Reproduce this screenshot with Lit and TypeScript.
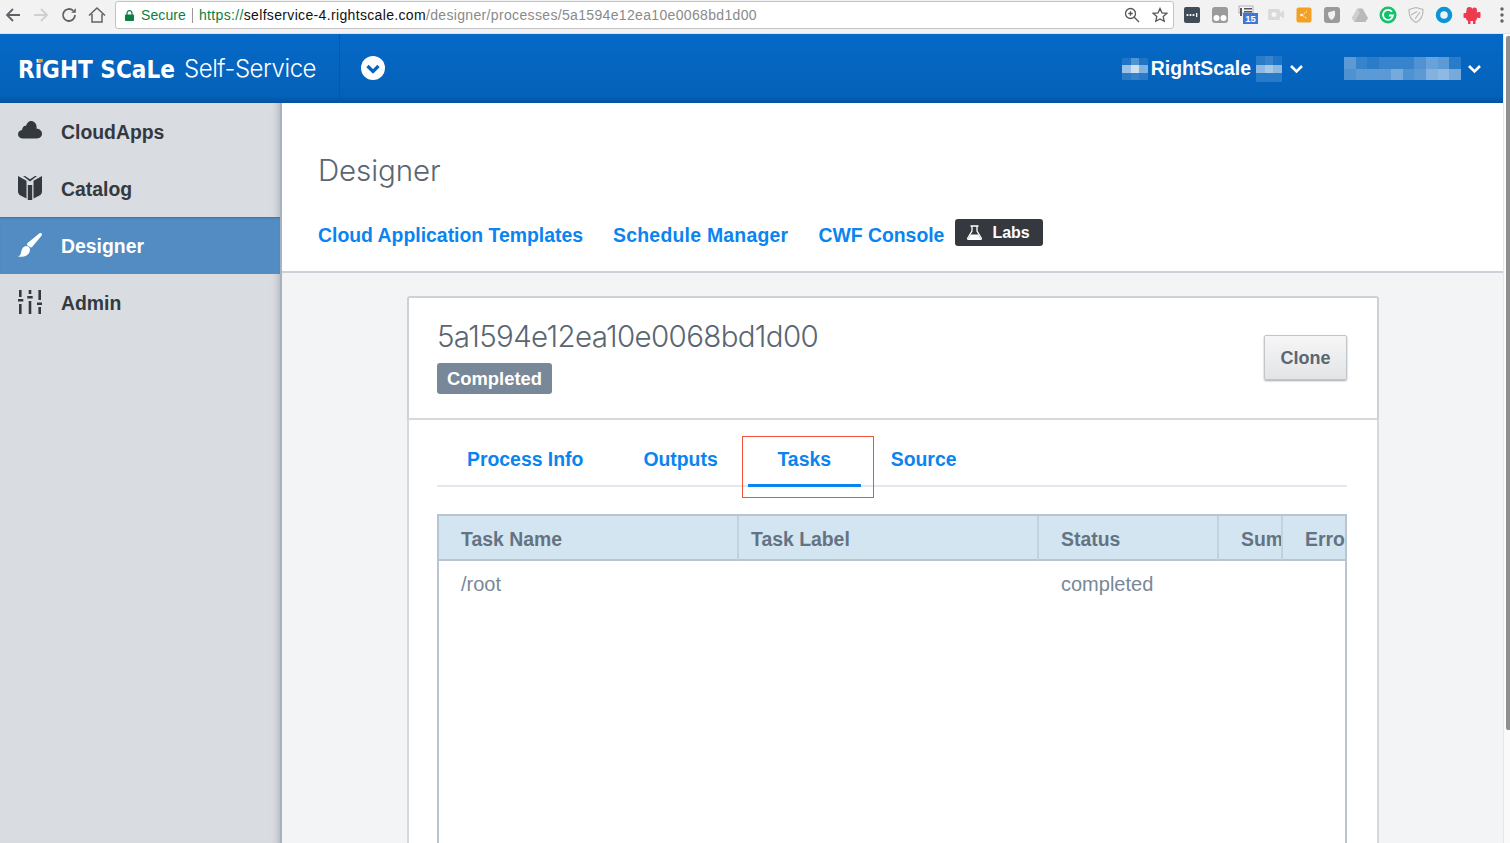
import { LitElement, html, css, svg } from "lit";
import { customElement } from "lit/decorators.js";

const pix = (w: number, h: number, cols: number, rows: number, cells: number[]) => svg`
  <svg width=${w} height=${h} viewBox="0 0 ${cols} ${rows}" preserveAspectRatio="none" shape-rendering="crispEdges">
    ${cells.map((a, i) => svg`<rect x=${i % cols} y=${Math.floor(i / cols)} width="1" height="1" fill="#fff" fill-opacity=${a}></rect>`)}
  </svg>`;

const navIcons = {
  cloud: html`<svg width="24" height="24" viewBox="0 0 24 24"><path d="M5 19.500C2 19.500 0 17.600 0 15.200c0-2.300 1.700-4 4-4.300C4.300 7.800 6.400 6.400 8 6.700 9 3.600 11 2 13 2c3 0 5.300 2.300 5.600 5.600 0 .9 0 1.400-.2 1.900 3.200.2 5.600 2.500 5.600 5.300 0 2.700-2.300 4.700-5 4.700z" fill="#33393f"/></svg>`,
  book: html`<svg width="24" height="24" viewBox="0 0 24 24" fill="#33393f"><path d="M0 0l8.500 4.700V22.500L3 19.700C1 18.700 0 17.500 0 15.500z"/><path d="M24 0l-8.500 4.700V22.500l5.500-2.800c2-1 3-2.200 3-4.200z"/><path d="M9.800 9h4.400v15H9.800z"/><path d="M5 0h2l5 3.300L17 0h2l-7 5.500z"/></svg>`,
  brush: html`<svg width="24" height="24" viewBox="0 0 24 24" fill="#fff"><path d="M21.500 .3c1-.7 2.500-.2 2.500 1.200 0 .6-.3 1.100-.7 1.600L14.300 13.800c-.6.700-1.300.9-2.100.5L9.500 12.300c-.7-.6-.8-1.400-.2-2z"/><path d="M8.500 13c1.800.2 3.500 1.500 3.500 3.800 0 4-3.700 6.800-8 7-1.500.1-3 0-4-.5 2.200-.6 2.800-2 3.200-4.600C3.600 15.900 5.900 12.800 8.500 13z"/></svg>`,
  sliders: html`<svg width="24" height="24" viewBox="0 0 24 24" fill="#33393f"><path d="M1 0h2.600v7H1zM0 9h5.300v2.600H0zM1 14h2.600v10H1zM10.700 0h2.600v4h-2.600zM9.300 6h5.400v2.600H9.300zM10.700 11h2.600v13h-2.600zM20.400 0h2.600v10h-2.600zM19 12.500h5v2.600h-5zM20.400 17h2.600v7h-2.600z"/></svg>`,
};

@customElement("app-root")
export class AppRoot extends LitElement {
  static styles = css`
    :host { display: block; width: 100%; height: 843px; overflow: hidden; font-family: "Liberation Sans", Arial, sans-serif; color: #5a6672; background: #fff; }
    * { box-sizing: border-box; }
    .chrome { height: 34px; background: #f2f2f2; display: flex; align-items: flex-start; padding-top: 1px; border-bottom: 1px solid #e2e2e2; }
    .nav { width: 115px; height: 28px; display: flex; align-items: center; padding-left: 4px; gap: 10px; flex: none; }
    .nav svg { display: block; flex: none; }
    .omni { width: 1059px; height: 28px; flex: none; background: #fff; border: 1px solid #c4c4c4; border-radius: 3px; display: flex; align-items: center; padding-left: 9px; font-size: 14px; white-space: nowrap; }
    .secure { color: #0b8043; margin-left: 7px; letter-spacing: .1px; }
    .sep { width: 1px; height: 15px; background: #999; margin: 0 6px; }
    .url { letter-spacing: .34px; }
    .g { color: #0b8043; } .k { color: #111; } .d { color: #8a8a8a; }
    .omni-end { margin-left: auto; display: flex; gap: 12px; align-items: center; padding-right: 5px; }
    .exts { display: flex; align-items: center; height: 28px; margin-left: 8px; gap: 8px; }
    .ext { width: 20px; height: 20px; display: block; flex: none; }
    .dots { margin-left: 10px; }

    .app { display: flex; height: 809px; }
    .page { flex: 1; min-width: 0; display: flex; flex-direction: column; }
    .scroll { width: 7px; flex: none; background: #fafafa; border-left: 1px solid #e6e6e6; padding: 2px 0 0 2px; }
    .thumb { width: 4px; height: 694px; background: #8f8f8f; border-radius: 2px 0 0 2px; }

    .top { height: 69px; flex: none; color: #fff; background: linear-gradient(#0669c7, #0461b9 90%, #04529f); display: flex; align-items: center; }
    .brand { width: 340px; height: 100%; border-right: 1px solid #0657a8; display: flex; align-items: center; padding-left: 18px; flex: none; }
    .logo { display: block; flex: none; }
    .logo text { font: 700 24.500px "DejaVu Sans", sans-serif; }
    .ss { font: 300 24px Inter, sans-serif; margin-left: 9px; letter-spacing: -.45px; white-space: nowrap; flex: none; }
    .caret-c { margin: -1px 0 0 21px; display: block; flex: none; }
    .acct { margin-left: auto; display: flex; align-items: center; font-weight: 700; font-size: 19.400px; }
    .acct svg { display: block; flex: none; }
    .acct .name { margin: 0 5px 0 3px; }
    .chev1 { margin-left: 8px; margin-right: 41px; }
    .chev2 { margin-left: 7px; margin-right: 22px; }

    .body { flex: 1; display: flex; min-height: 0; }
    .side { width: 282px; flex: none; background: #d9dce1; border-right: 2px solid #a5b2c0; box-shadow: inset -8px 0 8px -8px #9fa3a8; }
    .item { height: 57px; display: flex; align-items: center; padding: 2px 0 0 18px; gap: 19px; font-size: 19.400px; font-weight: 700; color: #33393f; }
    .item svg { display: block; margin-top: -4px; flex: none; }
    .item.on { background: #528cc2; color: #fff; box-shadow: inset 0 2px 2px -1px #3f719f; }
    .main { flex: 1; min-width: 0; background: #f3f4f6; display: flex; flex-direction: column; }
    .head { height: 170px; flex: none; background: #fff; border-bottom: 2px solid #cdd0d6; padding: 49px 0 0 36px; }
    h1 { margin: 0; font: 300 29.500px/36px Inter, sans-serif; color: #5a6672; letter-spacing: -.1px; }
    .links { display: flex; align-items: center; margin-top: 32px; gap: 30px; height: 30px; font-size: 19.400px; font-weight: 700; color: #0a84f0; white-space: nowrap; }
    .sm { letter-spacing: .25px; }
    .labs { background: #35393f; color: #fff; height: 27px; width: 88px; border-radius: 3px; font-size: 16px; display: flex; align-items: center; padding-left: 12px; gap: 10px; margin: -5px 0 0 -19px; font-weight: 700; }
    .card { width: 972px; margin: 23px 0 0 125px; flex: 1; display: flex; flex-direction: column; }
    .card-top { height: 124px; flex: none; background: #fff; border: 2px solid #cdd0d6; border-radius: 3px 3px 0 0; padding: 20px 30px 0 28px; display: flex; justify-content: space-between; }
    h2 { margin: 0; font: 300 29.500px/36px Inter, sans-serif; color: #5a6672; letter-spacing: -.65px; white-space: nowrap; }
    .badge { display: block; margin-top: 9px; width: 115px; height: 31px; background: #788898; color: #fff; border-radius: 3px; font-size: 18.400px; font-weight: 700; line-height: 31px; text-align: center; }
    .clone { margin-top: 17px; width: 83px; height: 45px; padding-top: 2px; border: 1px solid #c2c5c9; border-radius: 2px; background: linear-gradient(#f6f6f7, #e2e4e6); box-shadow: 0 1px 2px #a4a8ac; font-size: 18px; font-weight: 700; color: #5a6672; display: flex; align-items: center; justify-content: center; }
    .card-bot { flex: 1; margin-top: -2px; background: #fff; border: 2px solid #d5d8dd; border-bottom: 0; border-radius: 3px 3px 0 0; padding: 0 30px 0 28px; display: flex; flex-direction: column; }
    .tabs { display: flex; height: 67px; border-bottom: 2px solid #e3e8ee; font-size: 19.400px; font-weight: 700; color: #0a84f0; flex: none; }
    .tab { padding: 0 30px; height: 67px; line-height: 79px; position: relative; white-space: nowrap; }
    .tab.on::after { content: ""; position: absolute; left: 0; right: 0; bottom: 0; height: 3px; background: #0a84f0; }
    .mark { position: absolute; left: -6px; right: -13px; top: 16px; height: 62px; border: 1px solid #f4513a; }
    .tab.tasks { width: 113px; padding: 0; text-align: center; margin-right: 30px; }
    .tab.src { padding-left: 0; }
    .tbl { margin-top: 27px; flex: 1; border: 2px solid #b8c4d0; border-bottom: 0; }
    .tr { display: grid; grid-template-columns: 298px 300px 180px 64px 64px; }
    .th { height: 45px; background: #d4e5f2; border-bottom: 2px solid #b8c4d0; border-left: 2px solid #c2d3e0; font-size: 19.400px; font-weight: 700; color: #647382; line-height: 47px; padding-left: 22px; overflow: hidden; white-space: nowrap; }
    .th:first-child { border-left: 0; padding-left: 22px; }
    .th.tl { padding-left: 12px; }
    .td { font-size: 20px; color: #788898; padding-left: 22px; line-height: 46px; white-space: nowrap; }
    .td.st { padding-left: 24px; }
  `;

  render() {
    return html`
      <div class="chrome">
        <div class="nav">
          <svg width="18" height="18" viewBox="0 0 18 18" fill="none" stroke="#5f6368" stroke-width="1.800"><path d="M16 9H3M9 3L3 9l6 6"/></svg>
          <svg width="18" height="18" viewBox="0 0 18 18" fill="none" stroke="#cfcfcf" stroke-width="1.800"><path d="M2 9h13M9 3l6 6-6 6"/></svg>
          <svg width="18" height="18" viewBox="0 0 18 18" fill="none" stroke="#5f6368" stroke-width="1.800"><path d="M15 9a6 6 0 1 1-1.800-4.300"/><path d="M15.800 2.200v4.600h-4.600z" fill="#5f6368" stroke="none"/></svg>
          <svg width="18" height="18" viewBox="0 0 18 18" fill="none" stroke="#5f6368" stroke-width="1.500"><path d="M1 9.500L9 2l8 7.500M4 8v8h10V8"/></svg>
        </div>
        <div class="omni">
          <svg width="9" height="11" viewBox="0 0 9 11"><path d="M2 5V3.200a2.500 2.500 0 0 1 5 0V5" fill="none" stroke="#0b8043" stroke-width="1.200"/><rect y="4.500" width="9" height="6.500" rx=".8" fill="#0b8043"/></svg>
          <span class="secure">Secure</span><span class="sep"></span>
          <span class="url"><span class="g">https://</span><span class="k">selfservice-4.rightscale.com</span><span class="d">/designer/processes/5a1594e12ea10e0068bd1d00</span></span>
          <span class="omni-end">
            <svg width="16" height="16" viewBox="0 0 16 16" fill="none" stroke="#555" stroke-width="1.300"><circle cx="6.500" cy="6.500" r="5"/><path d="M10.300 10.300L15 15M4.300 6.500h4.400M6.500 4.300v4.400"/></svg>
            <svg width="16" height="16" viewBox="0 0 16 16" fill="none" stroke="#555" stroke-width="1.300"><path d="M8 1.500l2 4.400 4.800.5-3.600 3.200 1 4.700L8 11.900l-4.200 2.400 1-4.700L1.200 6.400 6 5.900z"/></svg>
          </span>
        </div>
        <div class="exts">
          <svg class="ext" viewBox="0 0 20 20"><rect x="2" y="2" width="16" height="16" rx="2" fill="#404d59"/><circle cx="5.500" cy="10" r="1.100" fill="#fff"/><circle cx="8.500" cy="10" r="1.100" fill="#fff"/><circle cx="11.500" cy="10" r="1.100" fill="#fff"/><rect x="14" y="8" width="1.300" height="4" fill="#fff"/></svg>
          <svg class="ext" viewBox="0 0 20 20"><rect x="2" y="2" width="16" height="16" rx="3" fill="#9b9b9b"/><circle cx="6.500" cy="13" r="3" fill="#fff"/><circle cx="13.500" cy="13" r="3" fill="#fff"/></svg>
          <svg class="ext" viewBox="0 0 20 20"><rect x="1" y="1" width="14" height="7" fill="#f5f5f5" stroke="#888" stroke-width=".6"/><path d="M2 3h2v8H2zM6 3h8v1.500H6zM6 6h8v1.500H6z" fill="#556"/><rect x="5" y="8" width="15" height="11" fill="#3d78d8"/><text x="12.500" y="17" font-size="9.500" font-weight="700" fill="#fff" text-anchor="middle" font-family="Liberation Sans">15</text></svg>
          <svg class="ext" viewBox="0 0 20 20"><rect x="2" y="4" width="12" height="11" rx="1.500" fill="#dadada"/><path d="M14 8l4-2.500v8L14 11z" fill="#dadada"/><circle cx="8" cy="9.500" r="2.500" fill="#f5f5f5"/></svg>
          <svg class="ext" viewBox="0 0 20 20"><rect x="2.500" y="2.500" width="15" height="15" rx="2" fill="#f4a024"/><path d="M13 6.500l-5 3.500 5 3.500" fill="none" stroke="#fff" stroke-width="1" stroke-dasharray="1.500 1"/><circle cx="7.500" cy="10" r="1.300" fill="#fff"/></svg>
          <svg class="ext" viewBox="0 0 20 20"><rect x="2" y="2" width="16" height="16" rx="3" fill="#9a9a9a"/><path d="M6 7.500l6.500-2c1.500 3.500.5 7.500-3 9.500-2.500-1.500-3.500-4-3.500-7.500z" fill="#f0f0f0"/></svg>
          <svg class="ext" viewBox="0 0 20 20"><path d="M7.500 3.500h5L18 13l-2.500 4h-11L2 13z" fill="#b9b9b9"/><path d="M7.500 3.500L2 13l2.500 4L10 7.500z" fill="#cfcfcf"/></svg>
          <svg class="ext" viewBox="0 0 20 20"><circle cx="10" cy="10" r="8.500" fill="#15c26b"/><path d="M14 6.800A5 5 0 1 0 15 10.500h-4" fill="none" stroke="#fff" stroke-width="1.800"/></svg>
          <svg class="ext" viewBox="0 0 20 20" fill="none" stroke="#b5b5b5" stroke-width="1.100"><path d="M3 4.500l7-2 7 2c.3 6-2 10.500-7 13-5-2.500-7.300-7-7-13z"/><path d="M5 10l6-3.500M9 14l5-7"/></svg>
          <svg class="ext" viewBox="0 0 20 20"><circle cx="10" cy="10" r="6" fill="none" stroke="#0a95d8" stroke-width="4.500"/></svg>
          <svg class="ext" viewBox="0 0 20 20" fill="#ee3a4f"><rect x="4" y="5" width="11" height="11" rx="3"/><circle cx="7.500" cy="5" r="3"/><circle cx="12.500" cy="5" r="2.500"/><rect x="1.500" y="8" width="3" height="5" rx="1"/><rect x="15" y="7" width="3.500" height="6" rx="1"/><rect x="6" y="14" width="2.500" height="5"/><rect x="11" y="14" width="2.500" height="5"/></svg>
          <svg class="dots" width="4" height="16" viewBox="0 0 4 16" fill="#5f6368"><circle cx="2" cy="2" r="1.700"/><circle cx="2" cy="8" r="1.700"/><circle cx="2" cy="14" r="1.700"/></svg>
        </div>
      </div>
      <div class="app">
        <div class="page">
          <div class="top">
            <div class="brand">
              <svg class="logo" width="157" height="24" viewBox="0 0 157 24"><text x="0" y="20.500" fill="#fff" textLength="157" lengthAdjust="spacingAndGlyphs">RiGHT SCaLe</text><rect x="20.200" y="1.900" width="4.600" height="3.300" fill="#f39a2b"/></svg>
              <span class="ss">Self-Service</span>
            </div>
            <svg class="caret-c" width="24" height="24" viewBox="0 0 24 24"><circle cx="12" cy="12" r="12" fill="#fff"/><path d="M6.500 10l5.500 5.500 5.500-5.500" fill="none" stroke="#0564c0" stroke-width="3.200"/></svg>
            <div class="acct">
              ${pix(26, 22, 3, 3, [.1, .3, .1, .6, .8, .5, .15, .2, .15])}
              <span class="name">RightScale</span>
              ${pix(26, 26, 3, 3, [.15, .2, .1, .55, .65, .55, .15, .15, .15])}
              <svg class="chev1" width="13" height="10" viewBox="0 0 13 10"><path d="M1 2l5.500 5.500L12 2" fill="none" stroke="#fff" stroke-width="2.600"/></svg>
              ${pix(117, 23, 10, 2, [.35, .2, .15, .2, .2, .2, .3, .4, .35, .15, .3, .35, .35, .35, .45, .3, .35, .5, .55, .45])}
              <svg class="chev2" width="13" height="10" viewBox="0 0 13 10"><path d="M1 2l5.500 5.500L12 2" fill="none" stroke="#fff" stroke-width="2.600"/></svg>
            </div>
          </div>
          <div class="body">
            <div class="side">
              <div class="item">${navIcons.cloud}CloudApps</div>
              <div class="item">${navIcons.book}Catalog</div>
              <div class="item on">${navIcons.brush}Designer</div>
              <div class="item">${navIcons.sliders}Admin</div>
            </div>
            <div class="main">
              <div class="head">
                <h1>Designer</h1>
                <div class="links">
                  <span>Cloud Application Templates</span>
                  <span class="sm">Schedule Manager</span>
                  <span>CWF Console</span>
                  <span class="labs"><svg width="15" height="15" viewBox="0 0 15 15"><path d="M3.500 1h8M5 1.500v4.500L.8 13c-.4.700 0 1.500.8 1.500h11.800c.8 0 1.200-.8.800-1.500L10 6V1.500" fill="none" stroke="#fff" stroke-width="1.300"/><path d="M3.600 9.500h7.800l2.500 4.500H1.100z" fill="#fff"/></svg>Labs</span>
                </div>
              </div>
              <div class="card">
                <div class="card-top">
                  <div>
                    <h2>5a1594e12ea10e0068bd1d00</h2>
                    <span class="badge">Completed</span>
                  </div>
                  <div class="clone">Clone</div>
                </div>
                <div class="card-bot">
                  <div class="tabs">
                    <div class="tab">Process Info</div>
                    <div class="tab">Outputs</div>
                    <div class="tab on tasks">Tasks<span class="mark"></span></div>
                    <div class="tab src">Source</div>
                  </div>
                  <div class="tbl">
                    <div class="tr">
                      <div class="th">Task Name</div><div class="th tl">Task Label</div><div class="th">Status</div><div class="th">Sum</div><div class="th">Erro</div>
                    </div>
                    <div class="tr">
                      <div class="td">/root</div><div class="td"></div><div class="td st">completed</div><div class="td"></div><div class="td"></div>
                    </div>
                  </div>
                </div>
              </div>
            </div>
          </div>
        </div>
        <div class="scroll"><div class="thumb"></div></div>
      </div>
    `;
  }
}
